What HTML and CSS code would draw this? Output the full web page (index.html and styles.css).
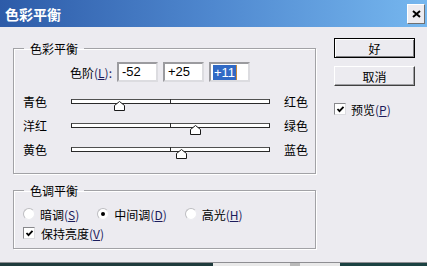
FILE: index.html
```html
<!DOCTYPE html>
<html lang="zh-CN">
<head>
  <meta charset="UTF-8">
  <title>色彩平衡</title>
  <link rel="stylesheet" href="styles.css">
</head>
<body>
  <div class="dialog">
    <div class="titlebar">
      <span class="title">色彩平衡</span>
      <span class="close">
        <svg width="9" height="8" viewBox="0 0 9 8"><path d="M1 1L8 7M8 1L1 7" stroke="#000" stroke-width="2"/></svg>
      </span>
    </div>

    <div class="content">
      <div class="panels">
        <fieldset class="group balance">
          <legend>色彩平衡</legend>
          <div class="levels">
            <span class="levels-label">色阶<span class="en">(<u>L</u>):</span></span>
            <span class="field">-52</span>
            <span class="field">+25</span>
            <span class="field"><span class="selected">+11</span><span class="caret"></span></span>
          </div>
          <div class="slider">
            <span class="from">青色</span>
            <div class="track"><span class="thumb" style="left: 24%"><svg width="11" height="10" viewBox="0 0 11 10"><path d="M0.5 9.5V4.5L5.5 0.5L10.5 4.5V9.5Z" fill="#fff" stroke="#1a1a1a"/></svg></span></div>
            <span class="to">红色</span>
          </div>
          <div class="slider">
            <span class="from">洋红</span>
            <div class="track"><span class="thumb" style="left: 62.5%"><svg width="11" height="10" viewBox="0 0 11 10"><path d="M0.5 9.5V4.5L5.5 0.5L10.5 4.5V9.5Z" fill="#fff" stroke="#1a1a1a"/></svg></span></div>
            <span class="to">绿色</span>
          </div>
          <div class="slider">
            <span class="from">黄色</span>
            <div class="track"><span class="thumb" style="left: 55.5%"><svg width="11" height="10" viewBox="0 0 11 10"><path d="M0.5 9.5V4.5L5.5 0.5L10.5 4.5V9.5Z" fill="#fff" stroke="#1a1a1a"/></svg></span></div>
            <span class="to">蓝色</span>
          </div>
        </fieldset>

        <fieldset class="group tone">
          <legend>色调平衡</legend>
          <div class="options">
            <span class="radio"><span class="radio-mark"></span><span>暗调<span class="en">(<u>S</u>)</span></span></span>
            <span class="radio"><span class="radio-mark on"></span><span>中间调<span class="en">(<u>D</u>)</span></span></span>
            <span class="radio"><span class="radio-mark"></span><span>高光<span class="en">(<u>H</u>)</span></span></span>
          </div>
          <span class="check">
            <span class="box"><svg width="9" height="9" viewBox="0 0 9 9"><path d="M1.5 4L3.5 6.2L7.5 1.8" fill="none" stroke="#000" stroke-width="1.8"/></svg></span>
            <span>保持亮度<span class="en">(<u>V</u>)</span></span>
          </span>
        </fieldset>
      </div>

      <div class="actions">
        <button class="btn default">好</button>
        <button class="btn">取消</button>
        <span class="check preview">
          <span class="box"><svg width="9" height="9" viewBox="0 0 9 9"><path d="M1.5 4L3.5 6.2L7.5 1.8" fill="none" stroke="#000" stroke-width="1.8"/></svg></span>
          <span>预览<span class="en">(<u>P</u>)</span></span>
        </span>
      </div>
    </div>
  </div>
</body>
</html>
```

FILE: styles.css
```css
* {
  margin: 0;
  padding: 0;
  box-sizing: border-box;
}

body {
  width: 427px;
  height: 266px;
  overflow: hidden;
  font-family: "Noto Sans CJK SC", sans-serif;
  font-size: 12px;
  color: #000;
  background: linear-gradient(to right, #1f3b3c 0 213px, #e9e9e9 213px 290px, #b9b9b9 290px 300px, #e9e9e9 300px 340px, #1b4242 340px);
}

.dialog {
  height: 263px;
  background: #ecebf0;
  border-bottom: 1px solid #8e8e92;
}

.titlebar {
  height: 27px;
  display: flex;
  align-items: center;
  justify-content: space-between;
  padding: 0 2px 0 5px;
  background: linear-gradient(to right, #2d5ba8, #4f88cf 50%, #76b7ef);
}

.title {
  color: #fff;
  font-weight: bold;
  font-size: 14px;
  line-height: 16px;
}

.close {
  width: 18px;
  height: 20px;
  display: flex;
  align-items: center;
  justify-content: center;
  background: #ecebf0;
  border: 1px solid;
  border-color: #fff #707070 #707070 #fff;
}

.en {
  color: #1c1c5c;
}

.content {
  display: flex;
  padding: 11px 0 0 13px;
}

.panels {
  margin-top: 3px;
  width: 303px;
}

.group {
  margin: 0;
  min-width: 0;
  border: 1px solid #a2a2a6;
  box-shadow: 1px 1px 0 #fff, inset 1px 1px 0 #fff;
  padding: 6px 7px 17px 9px;
}

.group legend {
  margin-left: 1px;
  padding: 0 6px;
  line-height: 15px;
}

.tone {
  margin-top: 9px;
  padding: 9px 7px 8px 9px;
}

/* levels row */
.levels {
  display: flex;
  align-items: center;
  gap: 5px;
  height: 20px;
}

.levels-label {
  width: 89px;
  text-align: right;
}

.field {
  display: flex;
  align-items: center;
  width: 41px;
  height: 20px;
  padding-left: 3px;
  background: #fff;
  border: 2px solid;
  border-color: #9b9b9f #dcdce0 #dcdce0 #9b9b9f;
  font: 13px/16px "Liberation Sans", sans-serif;
}

.field .selected {
  height: 15px;
  line-height: 15px;
  margin-left: -1px;
  padding: 0 1px;
  background: #316ac5;
  color: #fff;
}

.field .caret {
  width: 1px;
  height: 15px;
  background: #c8893a;
}

/* sliders */
.slider {
  display: flex;
  align-items: center;
  height: 14px;
  margin-top: 10px;
}

.levels + .slider {
  margin-top: 12px;
}

.slider .from {
  width: 48px;
}

.slider .to {
  margin-left: 14px;
}

.track {
  position: relative;
  width: 199px;
  height: 5px;
  border: 1px solid #2a2a2a;
  border-top-color: #505050;
  background: #fff;
}

.track::after {
  content: "";
  position: absolute;
  left: 50%;
  top: -1px;
  bottom: -1px;
  width: 1px;
  background: #2a2a2a;
}

.thumb {
  position: absolute;
  top: 1px;
  width: 11px;
  height: 10px;
  margin-left: -5px;
  z-index: 1;
}

.thumb svg {
  display: block;
}

/* tone options */
.options {
  display: flex;
  align-items: center;
  gap: 18px;
  height: 14px;
}

.radio {
  display: flex;
  align-items: center;
  gap: 5px;
}

.radio-mark {
  position: relative;
  width: 12px;
  height: 12px;
  border-radius: 50%;
  background: #fff;
  border: 1px solid;
  border-color: #bdbdc1 #ececf0 #ececf0 #bdbdc1;
}

.radio-mark.on::after {
  content: "";
  position: absolute;
  left: 3px;
  top: 3px;
  width: 4px;
  height: 4px;
  border-radius: 50%;
  background: #000;
}

.check {
  display: flex;
  align-items: center;
  gap: 6px;
  height: 14px;
  margin-top: 5px;
}

.box {
  display: flex;
  align-items: center;
  justify-content: center;
  width: 12px;
  height: 12px;
  background: #fff;
  border: 1px solid;
  border-color: #88888c #dcdce0 #dcdce0 #88888c;
}

/* buttons column */
.actions {
  display: flex;
  flex-direction: column;
  gap: 8px;
  width: 81px;
  margin-left: 18px;
}

.btn {
  height: 20px;
  font: inherit;
  color: #000;
  background: #ecebf0;
  border: 1px solid;
  border-color: #fff #404040 #404040 #fff;
  box-shadow: inset -1px -1px 0 #a0a0a4;
}

.btn.default {
  border-color: #000;
  box-shadow: inset 1px 1px 0 #fff, inset -1px -1px 0 #808084;
}

.preview {
  margin-top: 8px;
  gap: 5px;
}
```
